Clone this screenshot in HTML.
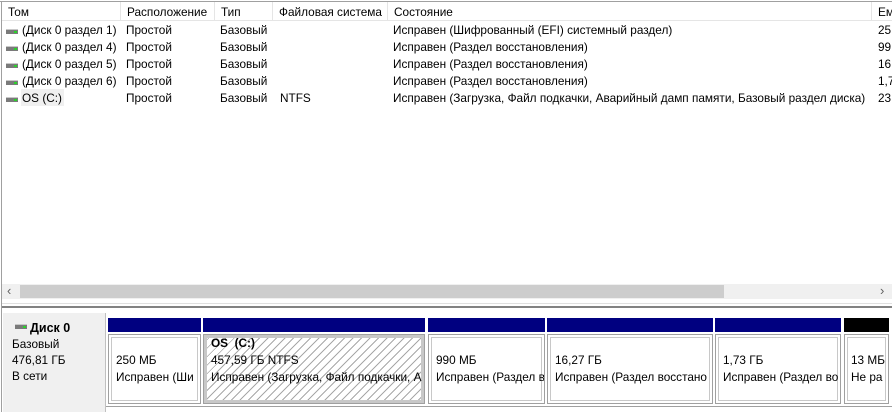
<!DOCTYPE html>
<html><head><meta charset="utf-8"><style>
body{margin:0;width:892px;height:412px;background:#fff;font-family:"Liberation Sans","DejaVu Sans",sans-serif;font-size:11.8px;color:#000;position:relative;overflow:hidden}
.a{position:absolute;white-space:nowrap}
.r{position:absolute;white-space:nowrap;line-height:17px}
.hd{position:absolute;top:2px;height:18px;border-right:1px solid #e5e5e5;line-height:20px;padding-left:6px;box-sizing:border-box;overflow:hidden}
.ic{position:absolute;width:12px;height:4px;background:#7a7a7a;border-top:1px solid #c8c8c8}
.ic:after{content:"";position:absolute;right:1px;top:1px;width:3px;height:2px;background:#2bd12b}
.bar{position:absolute;top:318px;height:14px;background:#000080}
.box{position:absolute;top:334px;height:70px;border:1px solid #a0a0a0;box-shadow:inset 0 0 0 2px #fff,inset 0 0 0 3px #c8c8c8;box-sizing:border-box;overflow:hidden;line-height:17px;padding:17px 0 0 7px;white-space:nowrap}
</style></head><body>
<div class="a" style="left:0;top:1px;width:892px;height:1px;background:#a0a0a0"></div>
<div class="a" style="left:1px;top:1px;width:1px;height:411px;background:#a0a0a0"></div>
<div class="hd" style="left:2px;width:119px">Том</div>
<div class="hd" style="left:121px;width:94px">Расположение</div>
<div class="hd" style="left:215px;width:58px">Тип</div>
<div class="hd" style="left:273px;width:115px">Файловая система</div>
<div class="hd" style="left:388px;width:484px">Состояние</div>
<div class="hd" style="left:872px;width:30px">Ем</div>
<div class="a" style="left:2px;top:20px;width:890px;height:1px;background:#e5e5e5"></div>

<div class="ic" style="left:6px;top:29px"></div>
<div class="ic" style="left:6px;top:46px"></div>
<div class="ic" style="left:6px;top:63px"></div>
<div class="ic" style="left:6px;top:80px"></div>
<div class="ic" style="left:6px;top:97px"></div>
<div class="a" style="left:21px;top:89px;background:#f0f0f0;width:43px;height:17px"></div>
<div class="r" style="left:22px;top:22px">(Диск 0 раздел 1)<br>(Диск 0 раздел 4)<br>(Диск 0 раздел 5)<br>(Диск 0 раздел 6)<br>OS (C:)</div>

<div class="r" style="left:126px;top:22px">Простой<br>Простой<br>Простой<br>Простой<br>Простой</div>
<div class="r" style="left:220px;top:22px">Базовый<br>Базовый<br>Базовый<br>Базовый<br>Базовый</div>
<div class="r" style="left:280px;top:90px">NTFS</div>
<div class="r" style="left:393px;top:22px">Исправен (Шифрованный (EFI) системный раздел)<br>Исправен (Раздел восстановления)<br>Исправен (Раздел восстановления)<br>Исправен (Раздел восстановления)<br>Исправен (Загрузка, Файл подкачки, Аварийный дамп памяти, Базовый раздел диска)</div>
<div class="r" style="left:878px;top:22px">25<br>99<br>16,<br>1,7<br>23</div>

<div class="a" style="left:2px;top:284px;width:890px;height:15px;background:#f0f0f0"></div>
<div class="a" style="left:20px;top:285px;width:704px;height:13px;background:#cdcdcd"></div>
<div class="a" style="left:7px;top:283px;font-size:13px;color:#606060">‹</div>
<div class="a" style="left:880px;top:283px;font-size:13px;color:#606060">›</div>
<div class="a" style="left:2px;top:303px;width:890px;height:1px;background:#e0e0e0"></div>
<div class="a" style="left:2px;top:306px;width:890px;height:2px;background:#828282"></div>

<div class="a" style="left:3px;top:313px;width:102px;height:99px;background:#f0f0f0"></div>
<div class="a" style="left:105px;top:313px;width:1px;height:99px;background:#c0c0c0"></div>
<div class="ic" style="left:15px;top:324px"></div>
<div class="a" style="left:30px;top:321px;font-weight:bold;font-size:12.5px">Диск 0</div>
<div class="a" style="left:12px;top:336px;line-height:16px">Базовый<br>476,81 ГБ<br>В сети</div>

<div class="bar" style="left:108px;width:93px"></div>
<div class="bar" style="left:203px;width:222px"></div>
<div class="bar" style="left:428px;width:117px"></div>
<div class="bar" style="left:547px;width:166px"></div>
<div class="bar" style="left:715px;width:126px"></div>
<div class="bar" style="left:844px;width:45px;background:#000"></div>

<div class="box" style="left:108px;width:93px">250 МБ<br>Исправен (Ши</div>
<div class="box" style="left:203px;width:222px;padding-top:0;background:repeating-linear-gradient(135deg,#fff 0 5px,#a8a8a8 5px 6px);box-shadow:inset 0 0 0 3px #c8c8c8"><b>OS&nbsp; (C:)</b><br>457,59 ГБ NTFS<br>Исправен (Загрузка, Файл подкачки, А</div>
<div class="box" style="left:428px;width:117px">990 МБ<br>Исправен (Раздел в</div>
<div class="box" style="left:547px;width:166px">16,27 ГБ<br>Исправен (Раздел восстано</div>
<div class="box" style="left:715px;width:126px">1,73 ГБ<br>Исправен (Раздел во</div>
<div class="box" style="left:844px;width:45px;padding-left:6px">13 МБ<br>Не ра</div>
<div class="a" style="left:106px;top:406px;width:786px;height:1px;background:#a0a0a0"></div>
</body></html>
